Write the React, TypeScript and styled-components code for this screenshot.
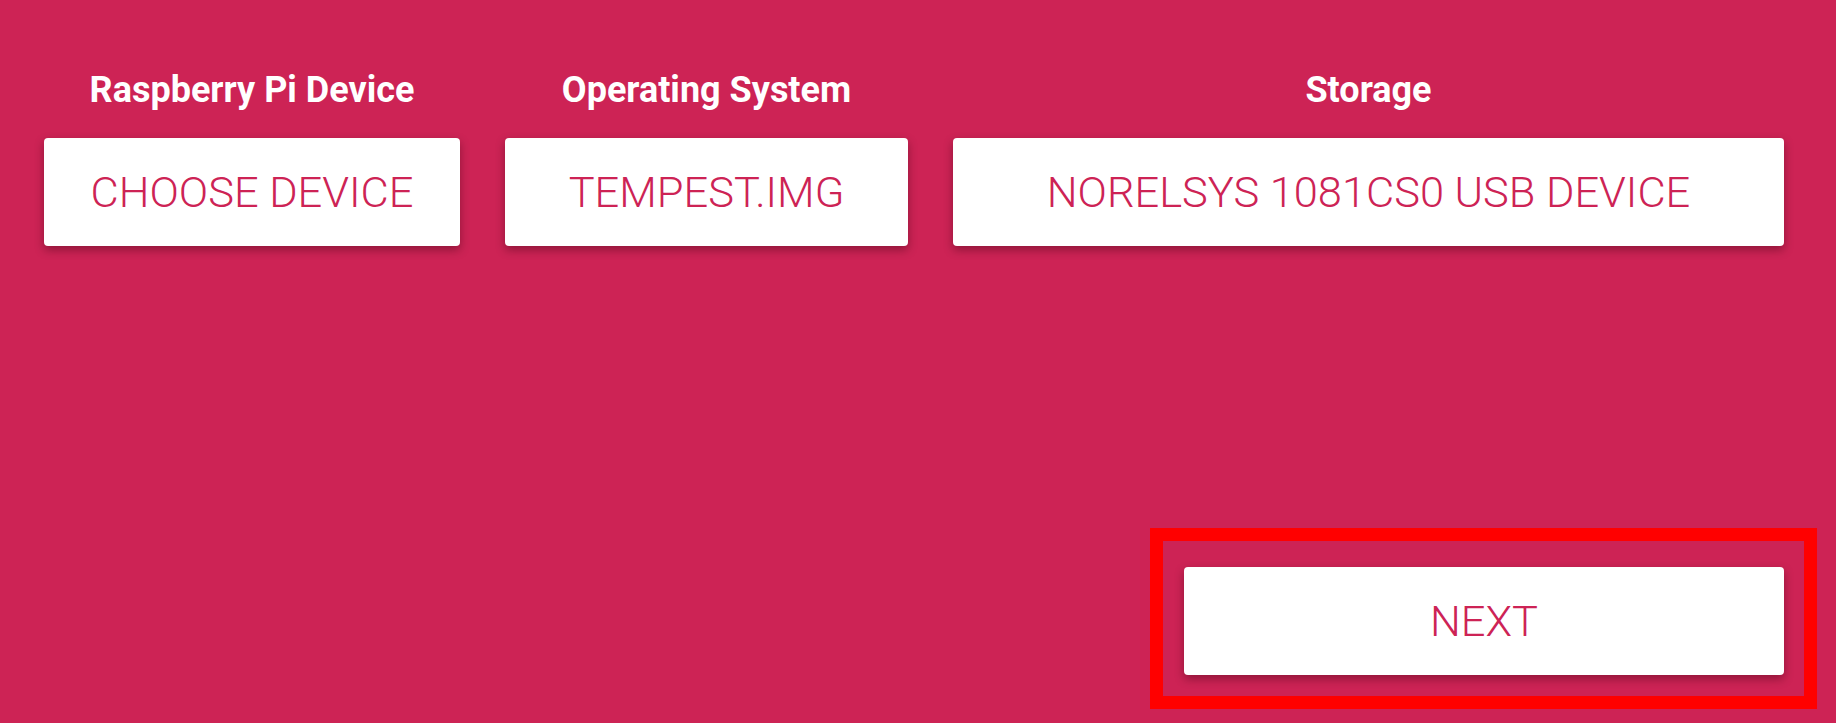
import React from "react";
import styled, { createGlobalStyle } from "styled-components";

const GlobalStyle = createGlobalStyle`
  html, body {
    margin: 0;
    padding: 0;
    background: #cd2355;
  }
  body {
    font-family: Roboto, "Liberation Sans", Arial, sans-serif;
  }
`;

const Page = styled.div`
  display: flex;
  flex-direction: column;
  min-height: 723px;
  box-sizing: border-box;
  background: #cd2355;
  padding: 69px 0 14px 44px;
`;

const Grid = styled.div`
  display: grid;
  grid-template-columns: 416px 403px 831px;
  column-gap: 45px;
  row-gap: 27px;
`;

const Label = styled.div`
  color: #ffffff;
  font-family: Roboto, "Liberation Sans", Arial, sans-serif;
  font-weight: 700;
  font-size: 36px;
  line-height: 42px;
  text-align: center;
`;

const Button = styled.button<{ $width?: number }>`
  display: flex;
  align-items: center;
  justify-content: center;
  width: ${(p) => (p.$width ? `${p.$width}px` : "100%")};
  height: 108px;
  margin: 0;
  padding: 0;
  border: none;
  border-radius: 4px;
  background: #ffffff;
  color: #cd2355;
  font-family: Roboto, "Liberation Sans", Arial, sans-serif;
  font-weight: 300;
  font-size: 43.4px;
  letter-spacing: 0;
  box-shadow: 0 4px 10px rgba(50, 0, 15, 0.4);
  cursor: pointer;
`;

const Footer = styled.div`
  margin-top: auto;
  display: flex;
  justify-content: flex-end;
  padding-right: 19px;
`;

const Highlight = styled.div`
  border: 13px solid #ff0000;
  padding: 26px 20px 21px 21px;
`;

export default function App() {
  return (
    <>
      <GlobalStyle />
      <Page>
        <Grid>
          <Label>Raspberry Pi Device</Label>
          <Label>Operating System</Label>
          <Label>Storage</Label>
          <Button>CHOOSE DEVICE</Button>
          <Button>TEMPEST.IMG</Button>
          <Button>NORELSYS 1081CS0 USB DEVICE</Button>
        </Grid>
        <Footer>
          <Highlight>
            <Button $width={600}>NEXT</Button>
          </Highlight>
        </Footer>
      </Page>
    </>
  );
}
